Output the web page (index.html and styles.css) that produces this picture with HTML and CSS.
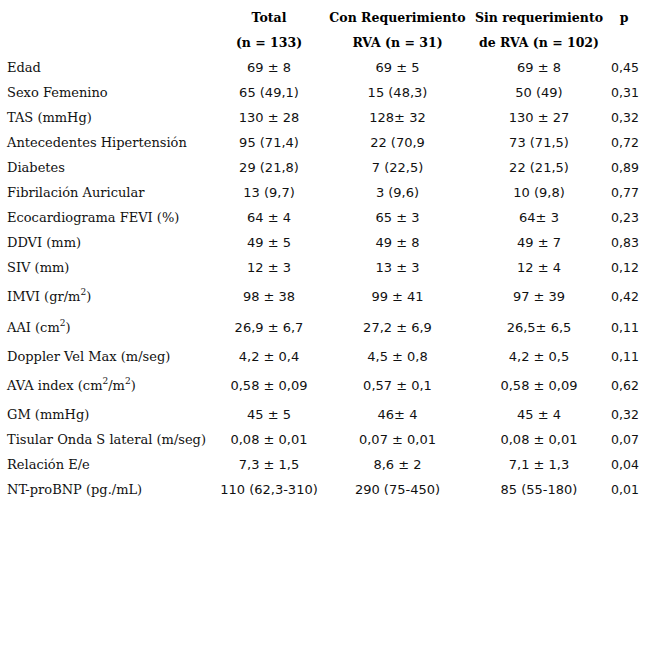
FILE: index.html
```html
<!DOCTYPE html>
<html lang="es">
<head>
<meta charset="utf-8">
<title>Tabla</title>
<link rel="stylesheet" href="styles.css">
</head>
<body>
<table class="data">
  <colgroup>
    <col class="c-label"><col class="c-total"><col class="c-con"><col class="c-sin"><col class="c-p">
  </colgroup>
  <thead>
    <tr><th></th><th>Total</th><th>Con Requerimiento</th><th>Sin requerimiento</th><th>p</th></tr>
    <tr><th></th><th>(n = 133)</th><th>RVA (n = 31)</th><th>de RVA (n = 102)</th><th></th></tr>
  </thead>
  <tbody>
    <tr><td>Edad</td><td>69 ± 8</td><td>69 ± 5</td><td>69 ± 8</td><td>0,45</td></tr>
    <tr><td>Sexo Femenino</td><td>65 (49,1)</td><td>15 (48,3)</td><td>50 (49)</td><td>0,31</td></tr>
    <tr><td>TAS (mmHg)</td><td>130 ± 28</td><td>128± 32</td><td>130 ± 27</td><td>0,32</td></tr>
    <tr><td>Antecedentes Hipertensión</td><td>95 (71,4)</td><td>22 (70,9</td><td>73 (71,5)</td><td>0,72</td></tr>
    <tr><td>Diabetes</td><td>29 (21,8)</td><td>7 (22,5)</td><td>22 (21,5)</td><td>0,89</td></tr>
    <tr><td>Fibrilación Auricular</td><td>13 (9,7)</td><td>3 (9,6)</td><td>10 (9,8)</td><td>0,77</td></tr>
    <tr><td>Ecocardiograma FEVI (%)</td><td>64 ± 4</td><td>65 ± 3</td><td>64± 3</td><td>0,23</td></tr>
    <tr><td>DDVI (mm)</td><td>49 ± 5</td><td>49 ± 8</td><td>49 ± 7</td><td>0,83</td></tr>
    <tr><td>SIV (mm)</td><td>12 ± 3</td><td>13 ± 3</td><td>12 ± 4</td><td>0,12</td></tr>
    <tr class="sup-row r-imvi"><td>IMVI (gr/m<sup>2</sup>)</td><td>98 ± 38</td><td>99 ± 41</td><td>97 ± 39</td><td>0,42</td></tr>
    <tr class="sup-row r-aai"><td>AAI (cm<sup>2</sup>)</td><td>26,9 ± 6,7</td><td>27,2 ± 6,9</td><td>26,5± 6,5</td><td>0,11</td></tr>
    <tr class="sup-row r-dop"><td>Doppler Vel Max (m/seg)</td><td>4,2 ± 0,4</td><td>4,5 ± 0,8</td><td>4,2 ± 0,5</td><td>0,11</td></tr>
    <tr class="sup-row r-ava"><td>AVA index (cm<sup>2</sup>/m<sup>2</sup>)</td><td>0,58 ± 0,09</td><td>0,57 ± 0,1</td><td>0,58 ± 0,09</td><td>0,62</td></tr>
    <tr><td>GM (mmHg)</td><td>45 ± 5</td><td>46± 4</td><td>45 ± 4</td><td>0,32</td></tr>
    <tr><td>Tisular Onda S lateral (m/seg)</td><td>0,08 ± 0,01</td><td>0,07 ± 0,01</td><td>0,08 ± 0,01</td><td>0,07</td></tr>
    <tr><td>Relación E/e</td><td>7,3 ± 1,5</td><td>8,6 ± 2</td><td>7,1 ± 1,3</td><td>0,04</td></tr>
    <tr><td>NT-proBNP (pg./mL)</td><td>110 (62,3-310)</td><td>290 (75-450)</td><td>85 (55-180)</td><td>0,01</td></tr>
  </tbody>
</table>
</body>
</html>
```

FILE: styles.css
```css
html, body {
  margin: 0;
  padding: 0;
  background: #ffffff;
}
body {
  padding: 5px 0 0 7px;
  color: #000;
}
.data {
  border-collapse: collapse;
  table-layout: fixed;
  width: 630px;
}
.c-label { width: 203px; }
.c-total { width: 118px; }
.c-con { width: 139px; }
.c-sin { width: 144px; }
.c-p { width: 26px; }

.data th, .data td {
  padding: 0;
  height: 25px;
  line-height: 25px;
  white-space: nowrap;
  vertical-align: middle;
}
.data th {
  font-family: "DejaVu Serif", serif;
  font-weight: bold;
  font-size: 12.5px;
  text-align: center;
}
.data td {
  font-family: "DejaVu Sans", sans-serif;
  font-size: 13px;
  text-align: center;
  color: #111;
}
.data td:first-child {
  font-family: "DejaVu Serif", serif;
  text-align: left;
  font-size: 13px;
}
.data td:last-child {
  font-size: 12.5px;
}
.data sup {
  font-size: 9px;
  line-height: 0;
  vertical-align: 6px;
}
.sup-row td {
  height: 25px;
}
.r-imvi td { padding: 4px 0 2px; }
.r-aai td { padding: 4px 0 0; }
.r-dop td { padding: 4px 0 0; }
.r-ava td { padding: 4px 0 4px; }
```
